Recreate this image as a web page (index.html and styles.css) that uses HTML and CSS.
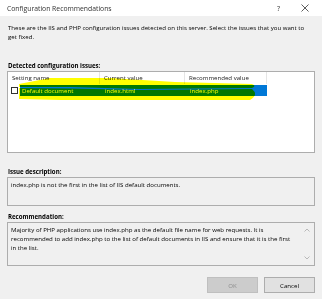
FILE: index.html
```html
<!DOCTYPE html>
<html lang="en">
<head>
  <meta charset="UTF-8" />
  <title>Configuration Recommendations</title>
  <link rel="stylesheet" href="styles.css">
</head>
<body>
  <div class="dialog">
    <div class="titlebar">
      <span class="title">Configuration Recommendations</span>
      <span class="help">?</span>
      <svg class="close" width="8" height="8" viewBox="0 0 8 8"><path d="M0.5 0.5 L7.5 7.5 M7.5 0.5 L0.5 7.5" stroke="#333" stroke-width="0.8" fill="none"/></svg>
    </div>

    <div class="content">
      <p class="intro">These are the IIS and PHP configuration issues detected on this server. Select the issues that you want to get fixed.</p>

      <div class="label">Detected configuration issues:</div>
      <div class="list">
        <div class="list-head">
          <div class="col">Setting name</div>
          <div class="col">Current value</div>
          <div class="col">Recommended value</div>
        </div>
        <div class="list-row">
          <div class="cell first"><span class="check"></span><span class="sel">Default document</span></div>
          <div class="cell sel">index.html</div>
          <div class="cell sel">index.php</div>
        </div>
      </div>

      <div class="label">Issue description:</div>
      <div class="textbox short">index.php is not the first in the list of IIS default documents.</div>

      <div class="label">Recommendation:</div>
      <div class="textbox tall">
        <div class="text">Majority of PHP applications use index.php as the default file name for web requests. It is recommended to add index.php to the list of default documents in IIS and ensure that it is the first in the list.</div>
        <div class="scroll">
          <svg width="6" height="4" viewBox="0 0 6 4"><path d="M0.5 3.5 L3 1 L5.5 3.5" stroke="#aaa" stroke-width="0.8" fill="none"/></svg>
          <svg width="6" height="4" viewBox="0 0 6 4"><path d="M0.5 0.5 L3 3 L5.5 0.5" stroke="#aaa" stroke-width="0.8" fill="none"/></svg>
        </div>
      </div>

      <div class="buttons">
        <button class="btn" disabled>OK</button>
        <button class="btn">Cancel</button>
      </div>
    </div>

    <!-- highlighter marks drawn over the selected row -->
    <svg class="marker" width="322" height="299" viewBox="0 0 322 299">
      <path d="M19 84 L50 78 L110 78 L175 82 L252 84 Q257 86 252 88 L140 89 L70 87 L19 87 Z" fill="#ffff00"/>
      <path d="M19 88 L70 88.6 L140 90 L252 89 Q259 95 250 100 L60 100 L19 99 Z" fill="#ffff00"/>
    </svg>
  </div>
</body>
</html>
```

FILE: styles.css
```css
* {
  margin: 0;
  padding: 0;
  box-sizing: border-box;
}
body {
  background: #f0f0f0;
  font-family: 'Open Sans', sans-serif;
  font-size: 6.1px;
  color: #000;
}
.dialog {
  position: relative;
  width: 322px;
  height: 299px;
  background: #f0f0f0;
}
.titlebar {
  height: 16px;
  background: #fff;
  display: flex;
  align-items: center;
  padding-left: 7px;
  padding-right: 13px;
}
.title {
  flex: 1;
  font-size: 6.8px;
  color: #333;
}
.help {
  font-size: 7px;
  color: #333;
  margin-right: 21px;
}
.content {
  padding: 7px 7px 0 7px;
}
.intro {
  padding-left: 1px;
  padding-right: 6px;
  line-height: 9px;
  height: 38px;
}
.label {
  font-weight: bold;
  padding-left: 1px;
  line-height: 9px;
  margin-bottom: 1px;
}
.list {
  height: 82px;
  background: #fff;
  border: 1px solid #adadad;
  margin-bottom: 14px;
}
.list-head,
.list-row {
  display: grid;
  grid-template-columns: 92px 85px 82px;
}
.list-head .col {
  height: 12px;
  line-height: 12px;
  padding-left: 4px;
  border-right: 1px solid #e5e5e5;
  color: #222;
}
.list-row {
  margin-top: 1px;
  height: 11px;
  line-height: 11px;
}
.cell {
  display: flex;
  align-items: center;
  padding-left: 5px;
}
.cell.first {
  padding-left: 3px;
}
.check {
  width: 7px;
  height: 7px;
  border: 1px solid #333;
  background: #fff;
  margin-right: 2px;
}
.sel {
  background: #0078d7;
  color: #fff;
}
.cell.first .sel {
  flex: 1;
  padding-left: 2px;
  height: 11px;
}
.textbox {
  border: 1px solid #adadad;
  padding: 2px 3px;
  line-height: 9px;
}
.short {
  height: 29px;
  margin-bottom: 6px;
}
.tall {
  height: 44px;
  display: flex;
  padding-right: 0;
  margin-bottom: 11px;
}
.tall .text {
  flex: 1;
  padding-right: 4px;
}
.scroll {
  width: 14px;
  display: flex;
  flex-direction: column;
  justify-content: space-between;
  align-items: center;
  padding: 3px 0 3px;
}
.scroll svg {
  display: block;
}
.buttons {
  display: flex;
  justify-content: flex-end;
  gap: 6px;
}
.btn {
  width: 51px;
  height: 16px;
  font-family: 'Open Sans', sans-serif;
  font-size: 6.1px;
  background: #e1e1e1;
  border: 1px solid #adadad;
  color: #000;
}
.btn:disabled {
  background: #cccccc;
  border-color: #bfbfbf;
  color: #8d8d8d;
}
.marker {
  position: absolute;
  top: 0;
  left: 0;
  pointer-events: none;
  mix-blend-mode: multiply;
}
```
